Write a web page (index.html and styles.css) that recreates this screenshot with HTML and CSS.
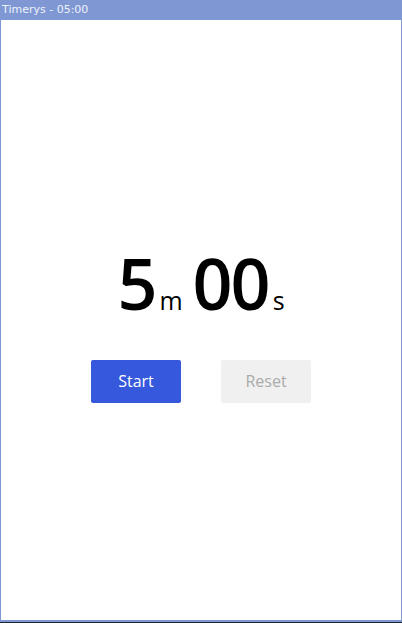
FILE: index.html
```html
<!DOCTYPE html>
<html lang="en">
<head>
  <meta charset="UTF-8">
  <title>Timerys - 05:00</title>
  <link rel="stylesheet" href="styles.css">
</head>
<body>
  <div class="window">
    <div class="titlebar">Timerys - 05:00</div>

    <div class="content">
      <div class="timer">
        <span class="digits">5</span><span class="unit">m</span>
        <span class="digits">00</span><span class="unit">s</span>
      </div>

      <div class="controls">
        <button class="btn start">Start</button>
        <button class="btn reset" disabled>Reset</button>
      </div>
    </div>
  </div>
</body>
</html>
```

FILE: styles.css
```css
/* Window frame */
html, body {
  margin: 0;
  padding: 0;
  height: 100%;
}

body {
  font-family: "Open Sans", "Noto Sans", sans-serif;
  background: #fff;
}

.window {
  height: 100%;
  display: flex;
  flex-direction: column;
  box-sizing: border-box;
  border-bottom: 1px solid #1e2530;
}

.titlebar {
  height: 20px;
  line-height: 19px;
  padding-left: 2px;
  background: #7f98d4;
  color: #eef1fa;
  font-family: "DejaVu Sans", sans-serif;
  font-size: 11px;
}

.content {
  flex: 1;
  display: flex;
  flex-direction: column;
  align-items: center;
  justify-content: center;
  border: 1px solid #7f98d4;
  border-top: none;
  border-bottom-width: 2px;
  padding-bottom: 3px;
}

/* Timer display */
.timer {
  display: flex;
  align-items: baseline;
  color: #000;
}

.digits {
  font-size: 70px;
  font-weight: 600;
  letter-spacing: -2px;
}

.unit {
  font-size: 25px;
  margin-left: 4px;
  margin-right: 10px;
}

.unit:last-child {
  margin-right: 0;
}

/* Buttons */
.controls {
  display: flex;
  gap: 40px;
  margin-top: 29px;
}

.btn {
  width: 90px;
  height: 43px;
  border: none;
  border-radius: 2px;
  font-family: inherit;
  font-size: 16px;
  cursor: pointer;
}

.start {
  background: #3558dd;
  color: #fff;
}

.reset {
  background: #f0f0f0;
  color: #aaa;
  cursor: default;
}
```
